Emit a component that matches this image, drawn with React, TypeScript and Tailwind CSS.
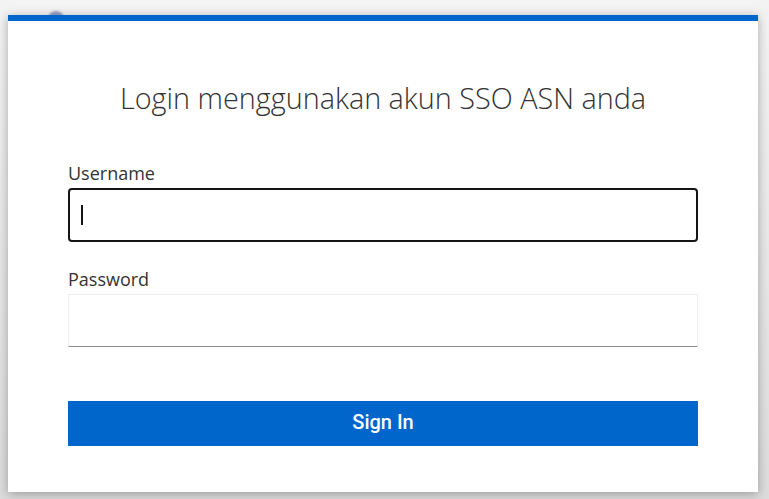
import React from 'react';

export default function App() {
  return (
    <div className="relative h-[499px] w-full overflow-hidden bg-gradient-to-b from-[#f3f3f3] to-[#dcdcdc] px-2 pt-[15px]" style={{ fontFamily: '"Open Sans", sans-serif' }}>
      {/* bit of the page peeking out behind the card */}
      <div className="absolute left-[48px] top-[11px] h-4 w-4 rounded-full bg-[#9a9cc4] blur-[1px]" />

      <div className="relative w-[750px] border-t-[6px] border-[#0066cc] bg-white px-[60px] pt-[56px] pb-[46px] shadow-[0_2px_10px_rgba(0,0,0,0.3)]">
        <h1 className="text-center text-[28.8px] font-light leading-[42px] text-[#333]">
          Login menggunakan akun SSO ASN anda
        </h1>

        <form className="mt-[43px]" onSubmit={(e) => e.preventDefault()}>
          <label htmlFor="username" className="block text-[18px] leading-[22px] text-[#333]">
            Username
          </label>
          <div className="relative mt-[4px]">
            <input
              id="username"
              type="text"
              className="block h-[54px] w-full rounded-[4px] border-[2.5px] border-[#151515] bg-white px-3 text-[16px] caret-transparent outline-none"
            />
            <span className="absolute left-[13px] top-[17px] h-[20px] w-[2px] bg-[#151515]" />
          </div>

          <label htmlFor="password" className="mt-[26px] block text-[18px] leading-[22px] text-[#333]">
            Password
          </label>
          <input
            id="password"
            type="password"
            className="mt-[4px] block h-[53px] w-full border border-[#ededed] border-b-[#8a8d90] bg-white px-3 text-[16px] outline-none"
          />

          <button
            type="submit"
            className="mt-[54px] flex h-[45px] w-full items-center justify-center bg-[#0066cc] pb-[4px] text-[20px] font-medium text-white"
            style={{ fontFamily: 'Roboto, sans-serif' }}
          >
            Sign In
          </button>
        </form>
      </div>
    </div>
  );
}
